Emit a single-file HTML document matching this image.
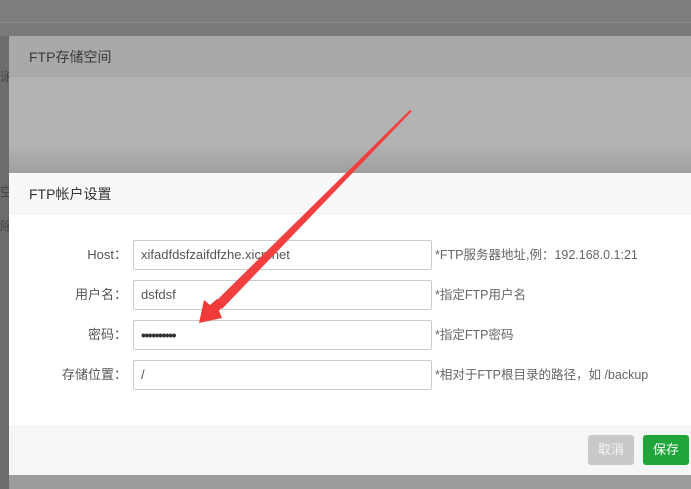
<!DOCTYPE html>
<html><head><meta charset="utf-8"><style>
*{margin:0;padding:0;box-sizing:border-box}
body{width:691px;height:489px;overflow:hidden;position:relative;background:#7a7a7a;font-family:"Liberation Sans","Noto Sans CJK SC",sans-serif;font-size:12px;color:#555}
.abs{position:absolute}
.lab{position:absolute;right:564px;width:100px;text-align:right;color:#555;line-height:30px;font-size:13px}
.inp{position:absolute;left:133px;width:299px;height:30px;border:1px solid #ccc;border-radius:2px;background:#fff;padding-left:7px;line-height:28px;color:#555;font-size:13px}
.hint{position:absolute;left:435px;line-height:30px;color:#666;font-size:12.5px}
</style></head><body>
<div class="abs" style="left:0;top:0;width:691px;height:22px;background:#7d7d7d"></div>
<div class="abs" style="left:0;top:22px;width:691px;height:1px;background:#8a8a8a"></div>
<div class="abs" style="left:0;top:36px;width:9px;height:453px;background:#6c6c6c"></div>
<div class="abs" style="left:0;top:68px;color:#444;font-size:12px">泳</div>
<div class="abs" style="left:0;top:183px;color:#444">空</div>
<div class="abs" style="left:0;top:217px;color:#444">除</div>
<div class="abs" style="left:9px;top:36px;width:682px;height:41px;background:#a9a9a9;border-bottom:1px solid #a2a2a2"></div>
<div class="abs" style="left:29px;top:47px;font-size:14px;color:#3a3a3a">FTP存储空间</div>
<div class="abs" style="left:9px;top:77px;width:682px;height:96px;background:linear-gradient(#b3b3b3 70%,#9f9f9f)"></div>
<div class="abs" style="left:9px;top:173px;width:682px;height:41px;background:#f8f8f8;border-bottom:1px solid #eee"></div>
<div class="abs" style="left:29px;top:184px;font-size:14px;color:#333">FTP帐户设置</div>
<div class="abs" style="left:9px;top:214px;width:682px;height:212px;background:#fff"></div>
<div class="abs" style="left:9px;top:426px;width:682px;height:49px;background:#f5f6f5;border-top:1px solid #eee"></div>
<div class="abs" style="left:9px;top:475px;width:682px;height:14px;background:#9c9c9c"></div>

<div class="lab" style="top:240px;left:27px">Host：</div>
<div class="inp" style="top:240px">xifadfdsfzaifdfzhe.xicp.net</div>
<div class="hint" style="top:240px">*FTP服务器地址,例：192.168.0.1:21</div>
<div class="lab" style="top:280px;left:27px">用户名：</div>
<div class="inp" style="top:280px">dsfdsf</div>
<div class="hint" style="top:280px">*指定FTP用户名</div>
<div class="lab" style="top:320px;left:27px">密码：</div>
<div class="inp" style="top:320px;font-weight:bold;font-size:14px;letter-spacing:-1.5px;color:#333">••••••••••</div>
<div class="hint" style="top:320px">*指定FTP密码</div>
<div class="lab" style="top:360px;left:27px">存储位置：</div>
<div class="inp" style="top:360px">/</div>
<div class="hint" style="top:360px">*相对于FTP根目录的路径，如 /backup</div>

<div class="abs" style="left:588px;top:435px;width:46px;height:30px;background:#c9c9c9;border-radius:3px;color:#f4f4f4;text-align:center;line-height:30px;font-size:13px">取消</div>
<div class="abs" style="left:643px;top:435px;width:46px;height:30px;background:#20a53a;border-radius:3px;color:#fff;text-align:center;line-height:30px;font-size:13px">保存</div>

<svg class="abs" style="left:0;top:0" width="691" height="489">
<polygon points="410,110 412,111 222,309 215,302" fill="#f24040"/>
<polygon points="199,323 204,300 210,305 217,299 223,305 219,311 222,318" fill="#f03a3a"/>
</svg>
</body></html>
